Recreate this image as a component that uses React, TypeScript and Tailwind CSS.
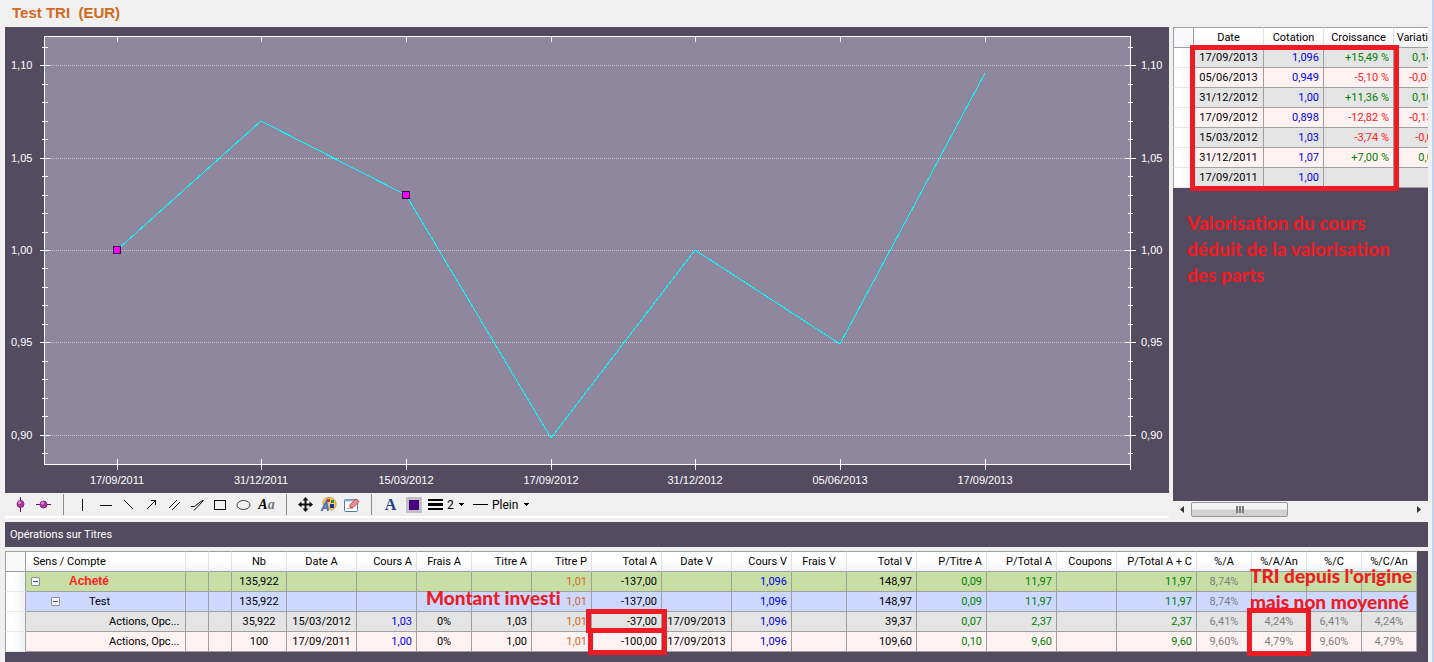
import { Fragment } from "react";
import type { ReactNode } from "react";
import { clsx } from "clsx";

/* ─── Types ──────────────────────────────────────────────── */

type Align = "left" | "center" | "right";

interface Column {
  label: string;
  width: string;
  align: Align;
  color?: string;
}

interface Quote {
  date: string;
  price: string;
  growth: string;
  change: string;
}

interface Operation {
  level: number;
  label: string;
  bg: string;
  values: string[];
}

/* ─── Data ───────────────────────────────────────────────── */

const QUOTES: Quote[] = [
  { date: "17/09/2013", price: "1,096", growth: "+15,49 %", change: "0,147" },
  { date: "05/06/2013", price: "0,949", growth: "-5,10 %", change: "-0,051" },
  { date: "31/12/2012", price: "1,00", growth: "+11,36 %", change: "0,102" },
  { date: "17/09/2012", price: "0,898", growth: "-12,82 %", change: "-0,132" },
  { date: "15/03/2012", price: "1,03", growth: "-3,74 %", change: "-0,04" },
  { date: "31/12/2011", price: "1,07", growth: "+7,00 %", change: "0,07" },
  { date: "17/09/2011", price: "1,00", growth: "", change: "" },
];

const BLUE = "text-[#0000f0]";
const GREEN = "text-[#008000]";
const GRAY = "text-[#808080]";
const ORANGE = "text-[#d2691e]";

const COLUMNS: Column[] = [
  { label: "", width: "w-[23px]", align: "center" },
  { label: "", width: "w-[23px]", align: "center" },
  { label: "Nb", width: "w-[55px]", align: "center" },
  { label: "Date A", width: "w-[70px]", align: "center" },
  { label: "Cours A", width: "w-[60px]", align: "right", color: BLUE },
  { label: "Frais A", width: "w-[55px]", align: "center" },
  { label: "Titre A", width: "w-[60px]", align: "right" },
  { label: "Titre P", width: "w-[60px]", align: "right", color: ORANGE },
  { label: "Total A", width: "w-[70px]", align: "right" },
  { label: "Date V", width: "w-[70px]", align: "center" },
  { label: "Cours V", width: "w-[60px]", align: "right", color: BLUE },
  { label: "Frais V", width: "w-[55px]", align: "center" },
  { label: "Total V", width: "w-[70px]", align: "right" },
  { label: "P/Titre A", width: "w-[70px]", align: "right", color: GREEN },
  { label: "P/Total A", width: "w-[70px]", align: "right", color: GREEN },
  { label: "Coupons", width: "w-[60px]", align: "right" },
  { label: "P/Total A + C", width: "w-[80px]", align: "right", color: GREEN },
  { label: "%/A", width: "w-[55px]", align: "center", color: GRAY },
  { label: "%/A/An", width: "w-[55px]", align: "center", color: GRAY },
  { label: "%/C", width: "w-[55px]", align: "center", color: GRAY },
  { label: "%/C/An", width: "w-[55px]", align: "center", color: GRAY },
];

const OPERATIONS: Operation[] = [
  {
    level: 0,
    label: "Acheté",
    bg: "bg-[#c7dfa4]",
    values: ["", "", "135,922", "", "", "", "", "1,01", "-137,00", "", "1,096", "", "148,97", "0,09", "11,97", "", "11,97", "8,74%", "", "", ""],
  },
  {
    level: 1,
    label: "Test",
    bg: "bg-[#ccd8ff]",
    values: ["", "", "135,922", "", "", "", "", "1,01", "-137,00", "", "1,096", "", "148,97", "0,09", "11,97", "", "11,97", "8,74%", "", "", ""],
  },
  {
    level: 2,
    label: "Actions, Opc...",
    bg: "bg-[#e4e4e4]",
    values: ["", "", "35,922", "15/03/2012", "1,03", "0%", "1,03", "1,01", "-37,00", "17/09/2013", "1,096", "", "39,37", "0,07", "2,37", "", "2,37", "6,41%", "4,24%", "6,41%", "4,24%"],
  },
  {
    level: 2,
    label: "Actions, Opc...",
    bg: "bg-[#fff2f2]",
    values: ["", "", "100", "17/09/2011", "1,00", "0%", "1,00", "1,01", "-100,00", "17/09/2013", "1,096", "", "109,60", "0,10", "9,60", "", "9,60", "9,60%", "4,79%", "9,60%", "4,79%"],
  },
];

const POINTS = [
  { date: "17/09/2011", value: 1.0, marked: true },
  { date: "31/12/2011", value: 1.07 },
  { date: "15/03/2012", value: 1.03, marked: true },
  { date: "17/09/2012", value: 0.898 },
  { date: "31/12/2012", value: 1.0 },
  { date: "05/06/2013", value: 0.949 },
  { date: "17/09/2013", value: 1.096 },
];

/* ─── Chart ──────────────────────────────────────────────── */

const PLOT = { left: 39, right: 1125, top: 9, bottom: 437 };

const xAt = (i: number) => Math.floor(112 + i * 144.67);
const yAt = (v: number) => Math.round(223 - (v - 1) * 1848);

function PriceChart() {
  const ticks = Array.from({ length: 23 }, (_, i) => 89 + i);
  const line = POINTS.map((p, i) => `${xAt(i)},${yAt(p.value)}`).join(" ");

  return (
    <svg viewBox="0 0 1164 466" className="block h-auto w-full bg-[#534b5f]" role="img" aria-label="Cours Test TRI">
      <g shapeRendering="crispEdges">
        <rect
          x={PLOT.left + 0.5}
          y={PLOT.top + 0.5}
          width={PLOT.right - PLOT.left}
          height={PLOT.bottom - PLOT.top}
          fill="#8f879e"
          stroke="#fff"
        />
        {ticks.map((t) => {
          const y = yAt(t / 100) + 0.5;
          const major = t % 5 === 0;
          return (
            <Fragment key={t}>
              {major && <path d={`M${PLOT.left + 6} ${y}H${PLOT.right - 5}`} stroke="#c9c4d1" strokeDasharray="1 1" />}
              <path d={`M${PLOT.left - (major ? 4 : 2)} ${y}H${PLOT.left + (major ? 6 : 4)}`} stroke="#fff" />
              <path d={`M${PLOT.right - (major ? 5 : 2)} ${y}H${PLOT.right + (major ? 6 : 3)}`} stroke="#fff" />
            </Fragment>
          );
        })}
        {POINTS.map((p, i) => (
          <path
            key={p.date}
            d={`M${xAt(i) + 0.5} ${PLOT.top}v6M${xAt(i) + 0.5} ${PLOT.bottom - 5}v11`}
            stroke="#fff"
          />
        ))}
        <path d={`M${PLOT.right + 0.5} ${PLOT.bottom}v6`} stroke="#fff" />
        <polyline points={line} fill="none" stroke="#00ffff" />
        {POINTS.map((p, i) =>
          p.marked ? (
            <rect key={p.date} x={xAt(i) - 3.5} y={yAt(p.value) - 3.5} width="7" height="7" fill="#f0f" stroke="#301040" />
          ) : null
        )}
      </g>
      <g fill="#fff" fontSize="11" className="font-['Liberation_Sans',sans-serif]">
        {[90, 95, 100, 105, 110].map((t) => {
          const text = (t / 100).toFixed(2).replace(".", ",");
          return (
            <Fragment key={t}>
              <text x="6" y={yAt(t / 100) + 4}>{text}</text>
              <text x="1136" y={yAt(t / 100) + 4}>{text}</text>
            </Fragment>
          );
        })}
        {POINTS.map((p, i) => (
          <text key={p.date} x={xAt(i)} y="457" textAnchor="middle">{p.date}</text>
        ))}
      </g>
    </svg>
  );
}

/* ─── Toolbar ────────────────────────────────────────────── */

function ToolButton({ label, children }: { label: string; children: ReactNode }) {
  return (
    <button type="button" aria-label={label} className="flex h-[23px] w-[23px] items-center justify-center">
      <svg width="17" height="17" viewBox="0 0 17 17" fill="none" stroke="#111">
        {children}
      </svg>
    </button>
  );
}

function Separator() {
  return (
    <div className="flex w-4 justify-center">
      <div className="h-[21px] w-px bg-[#8c8c8c]" />
    </div>
  );
}

function Caret() {
  return (
    <svg width="5" height="3" viewBox="0 0 5 3" className="shrink-0" shapeRendering="crispEdges">
      <path d="M0 0h5L2.5 3z" fill="#000" />
    </svg>
  );
}

function Toolbar() {
  return (
    <div className="flex h-[25px] items-center border-b-2 border-white pl-1 font-['Roboto',sans-serif] text-[12px]">
      <ToolButton label="Point vertical">
        <path d="M8.5 1v15" stroke="#6a1463" />
        <circle cx="8.5" cy="8" r="3.5" fill="#a9389f" stroke="#8a2a82" />
        <circle cx="7.5" cy="6.5" r="1.5" fill="#d98fd3" stroke="none" />
      </ToolButton>
      <ToolButton label="Point horizontal">
        <path d="M1 8.5h15" stroke="#6a1463" />
        <circle cx="8.5" cy="8.5" r="3.5" fill="#a9389f" stroke="#8a2a82" />
        <circle cx="7.5" cy="7" r="1.5" fill="#d98fd3" stroke="none" />
      </ToolButton>
      <Separator />
      <ToolButton label="Ligne verticale">
        <path d="M8.5 3v12" />
      </ToolButton>
      <ToolButton label="Ligne horizontale">
        <path d="M3 9.5h12" />
      </ToolButton>
      <ToolButton label="Ligne">
        <path d="M4 4l9 9" />
      </ToolButton>
      <ToolButton label="Flèche">
        <path d="M4 13l9-9M8 4.5h4.500V9" />
      </ToolButton>
      <ToolButton label="Parallèles">
        <path d="M3 12l8-8M6 14l8-8" />
      </ToolButton>
      <ToolButton label="Éventail">
        <path d="M2 10.500h3.500l3-2.500M8 8.500l6-4.500M5 14.500l9.500-10" />
      </ToolButton>
      <ToolButton label="Rectangle">
        <rect x="2.500" y="4.500" width="11" height="9" />
      </ToolButton>
      <ToolButton label="Ellipse">
        <ellipse cx="8.500" cy="9" rx="6.500" ry="4.500" stroke="#444" />
      </ToolButton>
      <button
        type="button"
        aria-label="Texte"
        className="flex h-[23px] w-[23px] items-center justify-center font-['Liberation_Serif',serif] text-[14px] font-bold italic"
      >
        A<span className="text-[#777]">a</span>
      </button>
      <Separator />
      <ToolButton label="Déplacer">
        <path d="M8.500 3v11M3 8.500h11" strokeWidth="2" />
        <path d="M8.500 1l3 3.500h-6zM8.500 16l3-3.500h-6zM1 8.500l3.500-3v6zM16 8.500l-3.500-3v6z" fill="#111" stroke="none" />
      </ToolButton>
      <ToolButton label="Couleurs">
        <path d="M9 1.500c4 0 7 3 7 6.500 0 4-3 6-5 6-2 0-1-2-3-2.500S3 10.500 3 7s2.500-5.500 6-5.500z" fill="#f3cf63" stroke="#c29a35" />
        <rect x="7" y="3" width="3" height="3" fill="#d6342c" stroke="none" />
        <rect x="11" y="4" width="3" height="3" fill="#2f8f3a" stroke="none" />
        <rect x="10" y="8" width="4" height="4" fill="#17369c" stroke="none" />
        <path d="M1.500 15l5-9.500 1.500 9.500M3.500 12h4" stroke="#5a6fc4" strokeWidth="2" />
      </ToolButton>
      <ToolButton label="Effacer">
        <rect x="1.500" y="3.500" width="13" height="12" rx="1" fill="#fff" stroke="#4f79b0" />
        <path d="M2 4.500h12" stroke="#8fb0dc" strokeWidth="2" />
        <path d="M4 12.500h6" stroke="#bbb" />
        <path d="M7 8.500l6-5.500 3 2.500-6 6H7z" fill="#ef8d8d" stroke="#c94a4a" />
      </ToolButton>
      <Separator />
      <button
        type="button"
        aria-label="Police"
        className="h-[23px] w-[23px] font-['Liberation_Serif',serif] text-[16px] leading-[23px] font-bold text-[#1f3f86]"
      >
        A
      </button>
      <button type="button" aria-label="Couleur du trait" className="flex h-[23px] w-[23px] items-center justify-center">
        <span className="h-4 w-4 border-3 border-[#c0c0c0] bg-[#4b0082]" />
      </button>
      <label className="flex items-center gap-1 pl-[3px]">
        <svg width="15" height="11" viewBox="0 0 15 11" shapeRendering="crispEdges" aria-label="Épaisseur">
          <path d="M0 0h15v2H0zM0 4h15v3H0zM0 9h15v2H0z" fill="#000" />
        </svg>
        <select className="w-2 appearance-none">
          <option>2</option>
        </select>
        <Caret />
      </label>
      <label className="flex items-center gap-1 pl-[9px]">
        <svg width="15" height="1" viewBox="0 0 15 1" shapeRendering="crispEdges" aria-label="Style">
          <path d="M0 0h15v1H0z" fill="#000" />
        </svg>
        <select className="w-7 appearance-none">
          <option>Plein</option>
        </select>
        <Caret />
      </label>
    </div>
  );
}

/* ─── Tables ─────────────────────────────────────────────── */

const ALIGN: Record<Align, string> = {
  left: "text-left pl-[7px]",
  center: "text-center",
  right: "text-right pr-1",
};

const GRID_FONT = "font-['Roboto',sans-serif] text-[11px] leading-[19px]";
const HEAD_CELL =
  "h-[21px] border-y border-r border-t-[#a0a0a0] border-b-[#a0a0a0] border-r-[#dfe1e5] bg-linear-to-b from-white from-50% to-[#f1f2f4] p-0 font-normal whitespace-nowrap";
const CELL = "h-5 border-r border-b border-[#a0a0a0] p-0 whitespace-nowrap";
const ROW_HEAD =
  "h-5 border-x border-b border-l-[#a0a0a0] border-r-[#a0a0a0] border-b-[#e8e8ec] bg-linear-to-r from-white from-40% to-[#f0f1f4] p-0";
const CORNER = "h-[21px] border border-[#a0a0a0] bg-[#f7f8fa] p-0";

function growthColor(value: string) {
  return value.startsWith("-") ? "text-[#ff2020]" : "text-[#008000]";
}

function QuoteTable() {
  return (
    <table className={clsx("w-[271px] table-fixed border-separate border-spacing-0", GRID_FONT)}>
      <colgroup>
        <col className="w-[21px]" />
        <col className="w-[70px]" />
        <col className="w-[60px]" />
        <col className="w-[70px]" />
        <col className="w-[50px]" />
      </colgroup>
      <thead>
        <tr>
          <th className={CORNER} />
          {["Date", "Cotation", "Croissance", "Variation"].map((h) => (
            <th key={h} scope="col" className={HEAD_CELL}>{h}</th>
          ))}
        </tr>
      </thead>
      <tbody>
        {QUOTES.map((q, i) => (
          <tr key={q.date} className={i % 2 === 0 ? "bg-[#e4e4e4]" : "bg-[#fff2f2]"}>
            <td className={ROW_HEAD} />
            <td className={clsx(CELL, "text-center")}>{q.date}</td>
            <td className={clsx(CELL, "pr-1 text-right", BLUE)}>{q.price}</td>
            <td className={clsx(CELL, "pr-1 text-right", growthColor(q.growth))}>{q.growth}</td>
            <td className={clsx(CELL, "pr-1 text-right", growthColor(q.change))}>{q.change}</td>
          </tr>
        ))}
      </tbody>
    </table>
  );
}

function TreeToggle({ label }: { label: string }) {
  return (
    <button type="button" aria-label={label} className="flex h-[9px] w-[9px] items-center justify-center rounded-[1px] border border-[#8e8f8f] bg-[#f6f6f6]">
      <span className="h-px w-[5px] bg-[#2f4f9f]" />
    </button>
  );
}

function OperationLabel({ level, label }: { level: number; label: string }) {
  if (level === 0) {
    return (
      <div className="flex items-center gap-[29px] pl-[5px]">
        <TreeToggle label="Réduire Acheté" />
        <span className="font-['Liberation_Sans',sans-serif] text-[12px] font-bold text-[#ff2020]">{label}</span>
      </div>
    );
  }
  if (level === 1) {
    return (
      <div className="flex items-center gap-[29px] pl-[25px]">
        <TreeToggle label="Réduire Test" />
        <span>{label}</span>
      </div>
    );
  }
  return <div className="pl-[83px]">{label}</div>;
}

function OperationTable() {
  return (
    <table className={clsx("w-[1412px] table-fixed border-separate border-spacing-0", GRID_FONT)}>
      <colgroup>
        <col className="w-[21px]" />
        <col className="w-[160px]" />
        {COLUMNS.map((c, i) => (
          <col key={i} className={c.width} />
        ))}
      </colgroup>
      <thead>
        <tr>
          <th className={CORNER} />
          <th scope="col" className={clsx(HEAD_CELL, ALIGN.left)}>Sens / Compte</th>
          {COLUMNS.map((c, i) => (
            <th key={i} scope="col" className={clsx(HEAD_CELL, ALIGN[c.align])}>{c.label}</th>
          ))}
        </tr>
      </thead>
      <tbody>
        {OPERATIONS.map((op, r) => (
          <tr key={r} className={op.bg}>
            <td className={ROW_HEAD} />
            <td className={CELL}>
              <OperationLabel level={op.level} label={op.label} />
            </td>
            {op.values.map((v, i) => (
              <td key={i} className={clsx(CELL, ALIGN[COLUMNS[i].align], COLUMNS[i].color)}>{v}</td>
            ))}
          </tr>
        ))}
      </tbody>
    </table>
  );
}

function ScrollBar() {
  return (
    <div className="flex h-[17px] items-center bg-[#f0f0f0]">
      <button type="button" aria-label="Défiler à gauche" className="flex h-full w-[18px] items-center justify-center">
        <svg width="4" height="7" viewBox="0 0 4 7"><path d="M4 0v7L0 3.500z" fill="#333" /></svg>
      </button>
      <button
        type="button"
        aria-label="Barre de défilement"
        className="flex h-[15px] w-[97px] items-center justify-center rounded-[2px] border border-[#979797] bg-linear-to-b from-[#f4f4f4] from-45% to-[#d2d2d4] to-55%"
      >
        <svg width="8" height="7" viewBox="0 0 8 7" shapeRendering="crispEdges">
          <path d="M0 0h2v7H0zM3 0h2v7H3zM6 0h2v7H6z" fill="#777" />
        </svg>
      </button>
      <button type="button" aria-label="Défiler à droite" className="ml-auto flex h-full w-[18px] items-center justify-center">
        <svg width="4" height="7" viewBox="0 0 4 7"><path d="M0 0v7l4-3.500z" fill="#333" /></svg>
      </button>
    </div>
  );
}

/* ─── Annotations ────────────────────────────────────────── */

const NOTE =
  "absolute font-['Lato',sans-serif] text-[19px] leading-[26px] font-black whitespace-nowrap text-[#ed1c24] [font-variant-ligatures:none]";
const FRAME = "pointer-events-none absolute border-5 border-[#ed1c24]";

/* ═══════════════════════════════════════════════════════════════
   COMPONENT
   ═══════════════════════════════════════════════════════════════ */

export default function App() {
  return (
    <div className="flex min-h-screen flex-col overflow-hidden border-r-2 border-[#bcd2ee] bg-[#f0f0f0] pr-1 pl-[5px] font-['Liberation_Sans',sans-serif] text-black">
      <h1 className="h-[27px] pl-[7px] text-[15px] leading-[26px] font-bold whitespace-pre text-[#d2691e]">
        Test TRI  (EUR)
      </h1>

      {/* Chart and quotes */}
      <div className="flex gap-1">
        <div className="min-w-0 flex-1">
          <PriceChart />
          <Toolbar />
        </div>
        <aside className="relative flex w-[255px] shrink-0 flex-col bg-[#534b5f]">
          <div className="flex-1 overflow-hidden">
            <QuoteTable />
          </div>
          <ScrollBar />
          <div className={clsx(FRAME, "top-[18px] left-[17px] h-[146px] w-[209px]")} />
          <p className={clsx(NOTE, "top-[183px] left-[14px]")}>
            Valorisation du cours
            <br />
            déduit de la valorisation
            <br />
            des parts
          </p>
        </aside>
      </div>

      {/* Operations */}
      <h2 className="mt-1 h-[25px] bg-[#534b5f] pl-[5px] font-['Roboto',sans-serif] text-[11px] leading-[26px] text-white">
        Opérations sur Titres
      </h2>
      <section className="relative mt-1 flex-1 bg-[#534b5f] pb-[10px]">
        <OperationTable />
        <p className={clsx(NOTE, "top-[34px] left-[421px]")}>Montant investi</p>
        <div className={clsx(FRAME, "top-[58px] left-[581px] h-6 w-[81px]")} />
        <div className={clsx(FRAME, "top-[77px] left-[583px] h-[27px] w-[79px]")} />
        <div className={clsx(FRAME, "top-[57px] left-[1242px] h-12 w-16")} />
        <p className={clsx(NOTE, "top-3 left-[1245px]")}>
          TRI depuis l'origine
          <br />
          mais non moyenné
        </p>
      </section>
    </div>
  );
}
